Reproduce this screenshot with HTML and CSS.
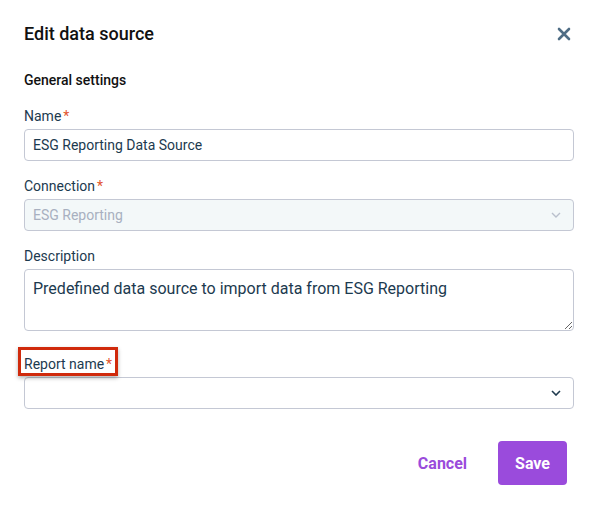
FILE: index.html
```html
<!DOCTYPE html>
<html lang="en">
<head>
  <meta charset="UTF-8" />
  <meta name="viewport" content="width=device-width, initial-scale=1" />
  <title>Edit data source</title>
  <link rel="stylesheet" href="styles.css">
</head>
<body>
  <div class="dialog">
    <div class="dialog-header">
      <h2>Edit data source</h2>
      <button class="close" aria-label="Close">
        <svg width="14" height="14" viewBox="0 0 14 14">
          <path d="M2 2 L12 12 M12 2 L2 12" stroke="#4f6d85" stroke-width="2.6" stroke-linecap="round" fill="none"/>
        </svg>
      </button>
    </div>

    <div class="section-title">General settings</div>

    <div class="field field-first">
      <label class="label">Name<span class="req">*</span></label>
      <input class="input" type="text" value="ESG Reporting Data Source" />
    </div>

    <div class="field">
      <label class="label">Connection<span class="req">*</span></label>
      <div class="select disabled">
        <span>ESG Reporting</span>
        <svg width="10" height="6" viewBox="0 0 10 6">
          <path d="M1 1 L5 5 L9 1" stroke="#b9c0cc" stroke-width="1.4" fill="none"/>
        </svg>
      </div>
    </div>

    <div class="field">
      <label class="label">Description</label>
      <textarea class="textarea">Predefined data source to import data from ESG Reporting</textarea>
    </div>

    <div class="field field-last">
      <label class="label marked">Report name<span class="req">*</span></label>
      <div class="select">
        <span></span>
        <svg width="10" height="6" viewBox="0 0 10 6">
          <path d="M1 1 L5 5 L9 1" stroke="#1f3a4e" stroke-width="1.6" fill="none"/>
        </svg>
      </div>
    </div>

    <div class="actions">
      <button class="btn btn-text">Cancel</button>
      <button class="btn btn-primary">Save</button>
    </div>
  </div>
</body>
</html>
```

FILE: styles.css
```css
body {
  margin: 0;
  background: #fff;
  font-family: Roboto, "Liberation Sans", sans-serif;
  color: #1c3a4f;
}

.dialog {
  padding: 22px 22px 0 24px;
}

.dialog-header {
  display: flex;
  justify-content: space-between;
  align-items: center;
  height: 24px;
}

.dialog-header h2 {
  margin: 0;
  font-size: 18px;
  font-weight: 500;
  line-height: 24px;
  color: #111;
}

.close {
  border: none;
  background: none;
  padding: 0;
  margin-right: 3px;
  display: flex;
  cursor: pointer;
}

.section-title {
  margin-top: 24px;
  font-size: 14px;
  font-weight: 500;
  line-height: 20px;
  color: #111;
}

.field {
  margin-top: 15px;
}

.field-first {
  margin-top: 16px;
}

.field-last {
  margin-top: 23px;
}

.label {
  display: inline-block;
  font-size: 14px;
  line-height: 20px;
  margin-bottom: 3px;
  color: #1c3a4f;
}

.req {
  color: #e2552e;
  margin-left: 2px;
}

.marked {
  position: relative;
}

.marked::after {
  content: "";
  position: absolute;
  left: -6px;
  right: -6px;
  top: -7px;
  bottom: -2px;
  border: 3px solid #d02a0c;
  box-shadow: 0 2px 4px rgba(0, 0, 0, 0.3);
}

.input,
.select,
.textarea {
  display: block;
  box-sizing: border-box;
  width: 100%;
  border: 1px solid #c4c8d4;
  border-radius: 4px;
  font-family: inherit;
  color: #1c3a4f;
  background: #fff;
}

.input {
  height: 32px;
  padding: 0 8px;
  font-size: 14px;
  outline: none;
}

.select {
  height: 32px;
  padding: 0 12px 0 8px;
  display: flex;
  align-items: center;
  justify-content: space-between;
  font-size: 14px;
}

.select.disabled {
  background: #f3f8f9;
  color: #a8b0c0;
}

.textarea {
  height: 62px;
  padding: 7px 8px;
  font-size: 16px;
  line-height: 24px;
  resize: vertical;
  outline: none;
}

.actions {
  display: flex;
  justify-content: flex-end;
  align-items: center;
  gap: 15px;
  margin-top: 32px;
  padding-right: 7px;
}

.btn {
  height: 44px;
  padding: 0 16px;
  border: none;
  border-radius: 4px;
  font-family: inherit;
  font-size: 16px;
  font-weight: 700;
  cursor: pointer;
}

.btn-text {
  background: none;
  color: #9a4bdb;
}

.btn-primary {
  padding: 0 17px;
  background: #9a4bdc;
  color: #fff;
}
```
